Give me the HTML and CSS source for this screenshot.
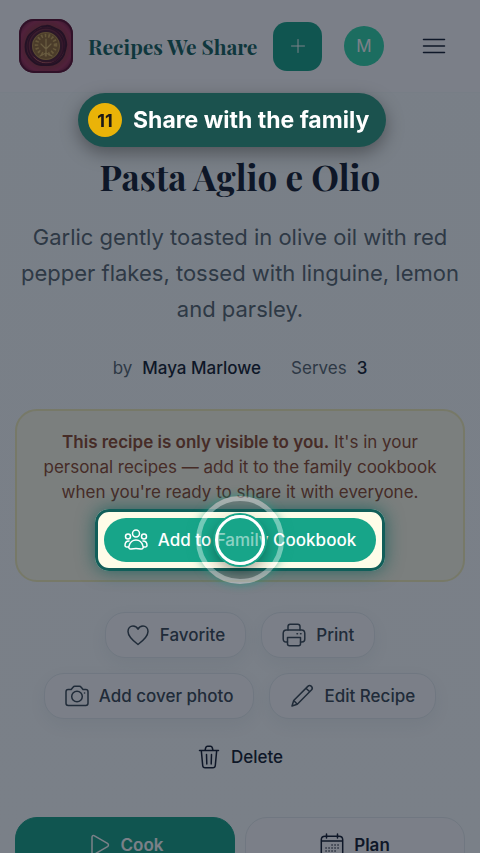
FILE: index.html
```
<!DOCTYPE html>
<html lang="en">

<head>
    <meta charset="UTF-8">
    <meta name="viewport" content="width=device-width, initial-scale=1.0">
    <title>Pasta Aglio e Olio - Recipes We Share</title>
    <link rel="stylesheet" href="styles.css">
</head>

<body>
    <header class="topbar">
        <a class="brand" href="#">
            <svg class="logo" viewBox="0 0 54 54" aria-hidden="true">
                <defs>
                    <radialGradient id="wax" cx="50%" cy="50%" r="68%">
                        <stop offset="0" stop-color="#a34a3a" />
                        <stop offset=".5" stop-color="#8a3238" />
                        <stop offset=".72" stop-color="#a02c55" />
                        <stop offset="1" stop-color="#3c0420" />
                    </radialGradient>
                    <linearGradient id="seal" x1="0" y1="0" x2="1" y2="1">
                        <stop offset="0" stop-color="#7c2c3c" />
                        <stop offset="1" stop-color="#5c1230" />
                    </linearGradient>
                </defs>
                <rect width="54" height="54" rx="15" fill="url(#wax)" />
                <rect x="1" y="1" width="52" height="52" rx="14" fill="none" stroke="#5a0a2c" stroke-width="2" />
                <path d="M27 7c4-1 7 2 10 3s6 3 8 7c1 3 3 6 2 10s-1 8-4 12-8 7-13 7-10 1-14-2-8-7-9-12 0-10 2-14 6-6 9-8 6-3 9-3z" fill="url(#seal)" stroke="#3d0c24" stroke-width="2" />
                <path d="M12 17c2-4 6-6 10-8M44 34c-3 7-9 10-16 10-5 0-10-2-13-6" fill="none" stroke="#c25a5a" stroke-width="1" stroke-linecap="round" />
                <circle cx="27" cy="27" r="18" fill="none" stroke="#4a0d26" stroke-width="1.500" />
                <circle cx="27" cy="27" r="15" fill="#94692f" stroke="#4e172a" stroke-width="2" />
                <circle cx="27" cy="27" r="13.500" fill="none" stroke="#b88a44" stroke-width="1" />
                <circle cx="27" cy="26" r="9.500" fill="none" stroke="#d1a655" stroke-width="3.500" stroke-dasharray="1.600 2" />
                <g fill="none" stroke="#d9b163" stroke-width="1.200" stroke-linecap="round">
                    <path d="M27 20v17M27 30l-5-5M27 30l5-5M27 34l-6 3M27 34l6 3" />
                </g>
            </svg>
            <span class="brand-name">Recipes We Share</span>
        </a>
        <button type="button" class="add-btn" aria-label="Add recipe">
            <svg class="icon-sm" viewBox="0 0 16 16"><path d="M8 1.500v13M1.500 8h13" /></svg>
        </button>
        <button type="button" class="avatar">M</button>
        <button type="button" class="menu-btn" aria-label="Menu">
            <svg class="icon" viewBox="0 0 24 24"><path d="M1.500 5.500h21M1.500 12h21M1.500 18.500h21" /></svg>
        </button>
    </header>

    <main class="recipe">
        <h1>Pasta Aglio e Olio</h1>
        <p class="summary">Garlic gently toasted in olive oil with red pepper flakes, tossed with linguine, lemon and parsley.</p>
        <div class="meta">
            <span class="meta-item">by <strong>Maya Marlowe</strong></span>
            <span class="meta-item">Serves <strong>3</strong></span>
        </div>

        <section class="notice">
            <p><strong>This recipe is only visible to you.</strong> It's in your personal recipes — add it to the family cookbook when you're ready to share it with everyone.</p>
            <div class="notice-action">
                <button type="button" class="share-btn">
                    <svg class="icon" viewBox="0 0 24 24">
                        <circle cx="12" cy="5.500" r="3.500" />
                        <circle cx="4" cy="8.500" r="2.500" />
                        <circle cx="20" cy="8.500" r="2.500" />
                        <path d="M12 12c-3.500 0-6 2.500-7 6-.7 2 .3 3.400 2.200 3 3.200-.8 6.400-.8 9.600 0 1.900.4 2.900-1 2.200-3-1-3.500-3.500-6-7-6z" />
                        <path d="M5 13c-2.500 0-4 2-4 4.500 0 1.400 1.500 1.700 3.500 1.500M19 13c2.500 0 4 2 4 4.500 0 1.400-1.500 1.700-3.500 1.500" />
                    </svg>
                    Add to Family Cookbook
                </button>
                <div class="spotlight"></div>
                <div class="pulse"></div>
                <div class="pointer"></div>
            </div>
        </section>

        <div class="actions">
            <button type="button" class="pill">
                <svg class="icon" viewBox="0 0 24 24"><path d="M12 21.500C8 18.500 2 14 2 8.500c0-3.300 2.200-5.500 5-5.500 2.200 0 4.100 1.200 5 3.200C12.900 4.200 14.800 3 17 3c2.800 0 5 2.200 5 5.500 0 5.500-6 10-10 13z" /></svg>
                Favorite
            </button>
            <button type="button" class="pill">
                <svg class="icon" viewBox="0 0 24 24">
                    <path d="M6 7V3.500C6 2.100 6.800 1.200 8.200 1.200h7.600c1.400 0 2.200.9 2.200 2.300V7" />
                    <path d="M5.500 19H4c-1.700 0-2.800-1.200-2.800-3v-5.500C1.200 8.500 2.500 7 4.500 7h15c2 0 3.300 1.500 3.300 3.500V16c0 1.800-1.100 3-2.800 3h-1.500" />
                    <path d="M5.500 14.500h13v6.300c0 1.200-.8 2-2 2h-9c-1.200 0-2-.8-2-2z M15 10.700h.5M18.500 10.700h.5" />
                </svg>
                Print
            </button>
            <button type="button" class="pill">
                <svg class="icon" viewBox="0 0 24 24">
                    <path d="M3.200 5.500h3L8 3.200c.5-.7 1-1 1.800-1h4.600c.8 0 1.300.3 1.800 1L18 5.500h2.800c1.300 0 2.200.9 2.200 2.200v11.600c0 1.300-.9 2.200-2.200 2.200H3.200c-1.300 0-2.200-.9-2.200-2.200V7.700c0-1.300.9-2.200 2.200-2.200z" />
                    <circle cx="12" cy="12.500" r="5.300" />
                    <path d="M19.500 9h.1" />
                </svg>
                Add cover photo
            </button>
            <button type="button" class="pill">
                <svg class="icon" viewBox="0 0 24 24"><path d="M2 22l1.700-5.500L17.800 2.400c1-1 2.600-1 3.600 0s1 2.600 0 3.600L7.300 20.200zM16 4.200l3.700 3.600M3.700 16.500l3.600 3.700" /></svg>
                Edit Recipe
            </button>
            <button type="button" class="pill pill-plain">
                <svg class="icon" viewBox="0 0 24 24"><path d="M2.500 5.500h19M8 5.500l.7-2.700c.3-1 .8-1.600 1.800-1.600h3c1 0 1.500.6 1.800 1.600l.7 2.700M4.300 5.500l1.400 15c.1 1.400 1 2.300 2.400 2.300h7.800c1.400 0 2.300-.9 2.400-2.300l1.400-15M9.500 9.500l.3 9.500M14.500 9.500l-.3 9.500" /></svg>
                Delete
            </button>
        </div>

        <div class="modes">
            <button type="button" class="mode mode-cook">
                <svg class="icon" viewBox="0 0 24 24"><path d="M5 4.300c0-1.500 1.200-2.200 2.500-1.500l13 7.600c1.300.8 1.300 2.400 0 3.200l-13 7.600c-1.300.7-2.500 0-2.500-1.500z" /></svg>
                Cook
            </button>
            <button type="button" class="mode">
                <svg class="icon" viewBox="0 0 24 24">
                    <path d="M5 3.200h14c2.200 0 3.700 1.400 3.700 3.600v12.500c0 2.200-1.500 3.600-3.700 3.600H5c-2.200 0-3.700-1.400-3.700-3.600V6.800c0-2.200 1.500-3.600 3.700-3.600zM1.300 8h21.400M6.500 1v4M17.500 1v4" />
                    <path d="M12 12h.1M15 12h.1M18 12h.1M6 15h.1M9 15h.1M12 15h.1M15 15h.1M18 15h.1M6 18h.1M9 18h.1M12 18h.1M15 18h.1" />
                </svg>
                Plan
            </button>
        </div>
    </main>

    <div class="tour-step">
        <span class="tour-number">11</span>
        <span>Share with the family</span>
    </div>
</body>

</html>
```
FILE: styles.css
```
* {
    box-sizing: border-box;
}

/* the page does not scroll while a tour step is open */
body {
    margin: 0;
    height: 100vh;
    overflow: hidden;
    font-family: Inter, "Liberation Sans", sans-serif;
    font-size: 17px;
    color: #0f172a;
    background: linear-gradient(#fafdfd, #fdfefe);
}

button {
    display: flex;
    align-items: center;
    justify-content: center;
    gap: 10px;
    padding: 0;
    border: none;
    background: none;
    font: inherit;
    color: inherit;
    cursor: pointer;
}

h1,
p {
    margin: 0;
}

.icon,
.icon-sm {
    width: 24px;
    height: 24px;
    flex: none;
    fill: none;
    stroke: currentColor;
    stroke-width: 1.5;
    stroke-linecap: round;
    stroke-linejoin: round;
}

.icon-sm {
    width: 16px;
    height: 16px;
    stroke-width: 1;
}

.topbar {
    display: flex;
    align-items: center;
    height: 93px;
    padding: 0 34px 0 19px;
    background: #fffdfe;
    border-bottom: 1px solid #f6fafa;
}

.brand {
    display: flex;
    flex: 1;
    align-items: center;
    gap: 15px;
    text-decoration: none;
}

.logo {
    width: 54px;
    height: 54px;
}

.brand-name {
    font-family: "Playfair Display", "Liberation Serif", serif;
    font-size: 21px;
    font-weight: 700;
    color: #115e59;
    white-space: nowrap;
}

.add-btn {
    width: 49px;
    height: 49px;
    border-radius: 14px;
    background: #12a184;
    color: #fff;
}

.avatar {
    width: 40px;
    height: 40px;
    margin: 0 38px 0 22px;
    border-radius: 50%;
    background: #2dd4a7;
    color: #fff;
}

.recipe {
    padding: 0 15px;
    text-align: center;
}

.recipe h1 {
    padding-top: 58px;
    font-family: "Playfair Display", "Liberation Serif", serif;
    font-size: 35px;
    font-weight: 700;
    line-height: 52px;
}

.summary {
    padding-top: 16px;
    font-size: 22px;
    line-height: 36px;
    color: #55636c;
}

.meta {
    display: flex;
    justify-content: center;
    gap: 30px;
    margin-top: 29px;
    line-height: 24px;
    color: #55636c;
}

.meta-item {
    display: flex;
    gap: 10px;
}

.meta strong {
    font-weight: 500;
    color: #0f172a;
}

.notice {
    margin-top: 29px;
    padding: 19px 20px 18px;
    border: 2px solid #f5efb8;
    border-radius: 22px;
    background: #fefce8;
    line-height: 25px;
    color: #8a4528;
}

.notice strong {
    font-weight: 600;
}

.notice-action {
    position: relative;
    display: flex;
    width: fit-content;
    margin: 13px auto 0;
}

.share-btn {
    height: 44px;
    padding: 0 20px;
    border-radius: 22px;
    background: #17a589;
    font-weight: 500;
    color: #fff;
}

.spotlight {
    position: absolute;
    z-index: 10;
    inset: -9px;
    border: 3px solid #115e59;
    border-radius: 14px;
    box-shadow: 0 0 18px rgba(17, 94, 89, 0.8), 0 0 0 9999px rgba(15, 24, 38, 0.55);
    pointer-events: none;
}

.pulse,
.pointer {
    position: absolute;
    z-index: 11;
    top: 50%;
    left: 50%;
    border-radius: 50%;
    transform: translate(-50%, -50%);
    pointer-events: none;
}

.pulse {
    width: 88px;
    height: 88px;
    border: 5px solid rgba(255, 255, 255, 0.4);
    box-shadow: 0 0 10px rgba(20, 160, 133, 0.6);
}

.pointer {
    width: 50px;
    height: 50px;
    border: 3px solid #fff;
    background: rgba(23, 165, 137, 0.5);
    box-shadow: 0 0 0 2px #17a589, 0 6px 16px rgba(0, 0, 0, 0.4);
}

.actions {
    display: flex;
    flex-wrap: wrap;
    justify-content: center;
    gap: 15px;
    margin-top: 30px;
}

.pill {
    height: 46px;
    padding: 0 20px;
    border: 1px solid #e6ecef;
    border-radius: 20px;
    background: #fffdfe;
    box-shadow: 0 6px 18px rgba(15, 70, 80, 0.06);
    font-weight: 500;
    color: #364450;
}

.pill-plain {
    border-color: transparent;
    background: none;
    box-shadow: none;
    color: #0f172a;
}

.modes {
    display: grid;
    grid-template-columns: 1fr 1fr;
    gap: 10px;
    margin-top: 37px;
}

.mode {
    height: 56px;
    border: 1px solid #e6ecef;
    border-radius: 22px;
    background: #fffdfe;
    font-weight: 600;
}

.mode-cook {
    border-color: #12a184;
    background: #12a184;
    color: #fff;
}

.tour-step {
    position: fixed;
    z-index: 20;
    top: 93px;
    left: 78px;
    display: flex;
    align-items: center;
    gap: 11px;
    height: 54px;
    padding: 0 17px 0 10px;
    border-radius: 27px;
    background: #1b524e;
    box-shadow: 0 6px 18px rgba(0, 0, 0, 0.35);
    font-size: 23px;
    font-weight: 700;
    color: #fff;
    white-space: nowrap;
}

.tour-number {
    display: flex;
    align-items: center;
    justify-content: center;
    width: 34px;
    height: 34px;
    border-radius: 50%;
    background: #eab308;
    font-size: 18px;
    color: #1c1917;
}
```
